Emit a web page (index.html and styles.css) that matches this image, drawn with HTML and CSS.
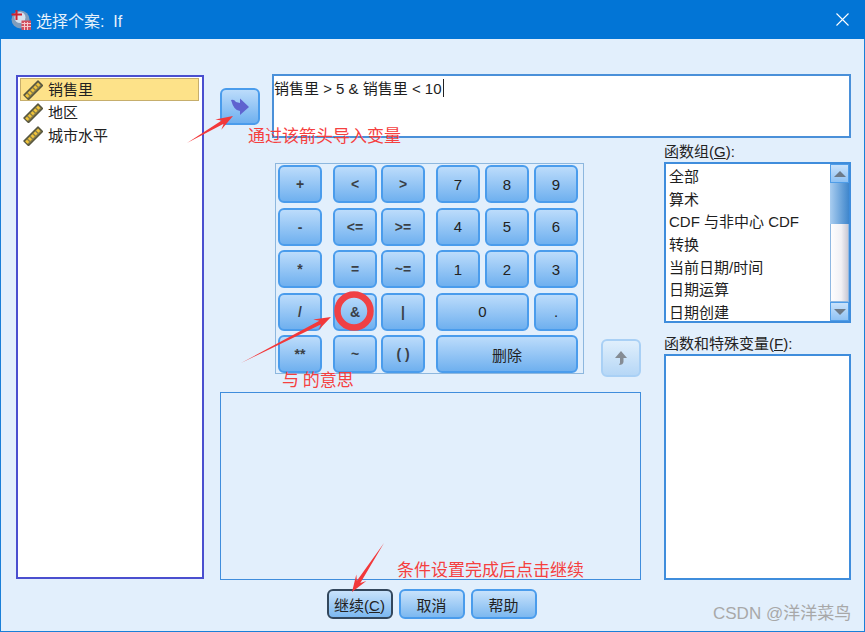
FILE: index.html
```html
<!DOCTYPE html>
<html lang="zh">
<head>
<meta charset="utf-8">
<title>选择个案: If</title>
<link rel="stylesheet" href="styles.css">
</head>
<body>
<svg class="defs" width="0" height="0" aria-hidden="true">
  <symbol id="ruler" viewBox="0 0 20 20">
    <path d="M1 15 L15 1 L19.500 5.500 L5.500 19.500 Z" fill="#8a7f4a" stroke="#57563f" stroke-width="1.500" stroke-linejoin="round"/>
    <path d="M3.300 16.700 L16.700 3.300" stroke="#f2c53a" stroke-width="3.200" stroke-dasharray="2.600 1.300"/>
  </symbol>
</svg>
<div class="window">
  <header class="titlebar">
    <svg class="app-icon" viewBox="0 0 20 20" width="20" height="20">
      <circle cx="9.500" cy="9.500" r="9" fill="#7f9dbc"/>
      <circle cx="9" cy="7.500" r="5.500" fill="#d5e2ee"/>
      <path d="M0.500 4.500 H11 M5.500 0 V10" stroke="#d0202f" stroke-width="2"/>
      <rect x="10.500" y="10.500" width="9.500" height="9.500" fill="#d2505f"/>
      <path d="M10.500 13.500 H20 M10.500 16.500 H20 M13.500 12 V20 M16.500 12 V20" stroke="#f4c9ce" stroke-width="1"/>
    </svg>
    <span class="title">选择个案:&nbsp;&nbsp;If</span>
    <svg class="close" viewBox="0 0 13 13" width="13" height="13">
      <path d="M0.500 0.500 L12.500 12.500 M12.500 0.500 L0.500 12.500" stroke="#fff" stroke-width="1.100"/>
    </svg>
  </header>

  <main class="main">
    <ul class="varlist">
      <li class="var selected"><svg class="ruler"><use href="#ruler"/></svg>销售里</li>
      <li class="var"><svg class="ruler"><use href="#ruler"/></svg>地区</li>
      <li class="var"><svg class="ruler"><use href="#ruler"/></svg>城市水平</li>
    </ul>

    <div class="work">
      <div class="top-row">
        <button class="move-btn">
          <svg viewBox="0 0 18 18" width="18" height="18">
            <path d="M0 2 Q3 1 5 4 L9 5 V0.500 L18 9 L9 17 V13 Q3 13 0 2 Z" fill="#5f63cf"/>
          </svg>
        </button>
        <div class="expr">销售里 &gt; 5 &amp; 销售里 &lt; 10<span class="caret"></span></div>
      </div>

      <div class="bottom-row">
        <div class="center">
          <div class="pad-row">
            <div class="keypad">
              <div class="group ops">
                <button class="key">+</button>
                <button class="key">-</button>
                <button class="key">*</button>
                <button class="key">/</button>
                <button class="key">**</button>
              </div>
              <div class="group rel">
                <button class="key">&lt;</button>
                <button class="key">&gt;</button>
                <button class="key">&lt;=</button>
                <button class="key">&gt;=</button>
                <button class="key">=</button>
                <button class="key">~=</button>
                <button class="key">&amp;</button>
                <button class="key">|</button>
                <button class="key">~</button>
                <button class="key">( )</button>
              </div>
              <div class="group nums">
                <button class="key digit">7</button>
                <button class="key digit">8</button>
                <button class="key digit">9</button>
                <button class="key digit">4</button>
                <button class="key digit">5</button>
                <button class="key digit">6</button>
                <button class="key digit">1</button>
                <button class="key digit">2</button>
                <button class="key digit">3</button>
                <button class="key digit span2">0</button>
                <button class="key digit">.</button>
                <button class="key digit span3">删除</button>
              </div>
            </div>
            <button class="up-btn">
              <svg viewBox="0 0 14 16" width="14" height="16">
                <path d="M7 1 L13 8 H9.500 V12 Q9 15 5 15 Q6.500 13 6 9 V8 H1 Z" fill="#858c94"/>
              </svg>
            </button>
          </div>
          <div class="panel"></div>
        </div>

        <aside class="side">
          <div class="label">函数组(<u>G</u>):</div>
          <div class="funcs">
            <ul class="func-items">
              <li>全部</li>
              <li>算术</li>
              <li>CDF 与非中心 CDF</li>
              <li>转换</li>
              <li>当前日期/时间</li>
              <li>日期运算</li>
              <li>日期创建</li>
            </ul>
            <div class="scrollbar">
              <div class="sb-btn"><span class="tri up"></span></div>
              <div class="sb-thumb"></div>
              <div class="sb-track"></div>
              <div class="sb-btn"><span class="tri down"></span></div>
            </div>
          </div>
          <div class="label second">函数和特殊变量(<u>F</u>):</div>
          <div class="specials"></div>
        </aside>
      </div>
    </div>
  </main>

  <footer class="footer">
    <button class="action default">继续(<u>C</u>)</button>
    <button class="action">取消</button>
    <button class="action">帮助</button>
  </footer>
</div>

<svg class="marks" viewBox="0 0 865 632" width="865" height="632" aria-hidden="true">
  <polygon points="187,143 221.700,120.400 215.300,119.400 233,116 221.300,129.800 223.700,123.800" fill="#f2383a"/>
  <polygon points="241,363 319.400,320.700 313.200,319.400 331,317 318.600,330 321.200,324.300" fill="#f2383a"/>
  <polygon points="384,543 356.900,580.800 356.300,574.500 352,592 366.300,581.100 360.300,583" fill="#f2383a"/>
  <circle cx="354" cy="311" r="16.500" fill="none" stroke="#f04044" stroke-width="6.500"/>
</svg>
<span class="note note-a">通过该箭头导入变量</span>
<span class="note note-b">与 的意思</span>
<span class="note note-c">条件设置完成后点击继续</span>
<span class="watermark">CSDN @洋洋菜鸟</span>
</body>
</html>
```
FILE: styles.css
```css
* { box-sizing: border-box; }
html, body { margin: 0; padding: 0; }
body {
  width: 865px;
  height: 632px;
  overflow: hidden;
  position: relative;
  background: #e2effc;
  color: #222;
  font-family: "Liberation Sans", "Noto Sans CJK SC", sans-serif;
  font-size: 15px;
}
ul { list-style: none; margin: 0; padding: 0; }
button { font: inherit; color: inherit; padding: 0; margin: 0; cursor: default; }
.defs { position: absolute; }

.window {
  width: 865px;
  height: 632px;
  display: flex;
  flex-direction: column;
  border: 1px solid #1a7fd8;
  border-top: 0;
}
.titlebar {
  height: 39px;
  flex: none;
  margin: 0 -1px;
  padding: 0 16px 0 11px;
  display: flex;
  align-items: center;
  background: #0275d6;
  color: #e6f1fb;
  font-size: 16px;
}
.app-icon { flex: none; }
.title { margin-left: 5px; flex: 1; }
.close { flex: none; }

.main {
  display: flex;
  gap: 16px;
  padding: 35px 0 0 15px;
  height: 541px;
  flex: none;
}
.varlist {
  width: 188px;
  height: 504px;
  margin-top: 1px;
  border: 2px solid #4a4fcf;
  background: #fff;
  padding: 1px 3px 1px 2px;
  flex: none;
}
.var {
  height: 23px;
  display: flex;
  align-items: center;
  gap: 5px;
  padding-left: 3px;
  font-size: 15px;
  line-height: 22px;
}
.var.selected {
  background: #fde289;
  box-shadow: inset 0 0 0 1px #c6ae6c;
}
.ruler { width: 20px; height: 20px; flex: none; }

.work { flex: none; width: 631px; }
.top-row { display: flex; gap: 12px; }
.move-btn {
  width: 40px;
  height: 37px;
  margin-top: 14px;
  flex: none;
  display: flex;
  align-items: center;
  justify-content: center;
  border: 2px solid #4a9cec;
  border-radius: 6px;
  background: linear-gradient(#bcdcfb, #6fb0ef);
}
.expr {
  width: 579px;
  height: 64px;
  border: 2px solid #4a90d9;
  background: #fff;
  padding: 2px 0 0;
  font-size: 15px;
  line-height: 21px;
  color: #1e1e1e;
}
.caret {
  display: inline-block;
  width: 1px;
  height: 18px;
  margin-left: 1px;
  vertical-align: -3px;
  background: #222;
}

.bottom-row { display: flex; margin-top: 5px; }
.center { width: 421px; flex: none; padding-top: 20px; }
.pad-row {
  height: 214px;
  margin-left: 55px;
  display: flex;
  justify-content: space-between;
}
.keypad {
  width: 309px;
  height: 211px;
  padding: 1px 0 0 2px;
  border: 1px solid #8db7de;
  display: flex;
  gap: 11px;
  align-items: flex-start;
}
.group {
  display: grid;
  grid-auto-rows: 38px;
  row-gap: 4.500px;
}
.ops { grid-template-columns: 44px; }
.rel { grid-template-columns: 44px 44px; column-gap: 4px; }
.nums { grid-template-columns: 44px 44px 44px; column-gap: 5px; }
.span2 { grid-column: span 2; }
.span3 { grid-column: span 3; }
.key {
  border: 2px solid #4a9cec;
  border-radius: 6px;
  background: linear-gradient(#bcdcfb, #6fb0ef);
  font-size: 14px;
  font-weight: 700;
  color: #3a3f46;
}
.digit { font-size: 15px; font-weight: 400; color: #222; }
.up-btn {
  width: 40px;
  height: 38px;
  align-self: flex-end;
  display: flex;
  align-items: center;
  justify-content: center;
  border: 2px solid #a9d0f5;
  border-radius: 6px;
  background: linear-gradient(#e0effc, #b6d7f6);
}
.panel {
  height: 188px;
  margin-top: 15px;
  border: 1px solid #3f8ddc;
}

.side { width: 187px; margin-left: 23px; flex: none; }
.label { height: 19px; font-size: 15px; line-height: 18px; color: #222; white-space: nowrap; }
.label.second { margin-top: 12px; }
.funcs {
  height: 161px;
  border: 2px solid #3f8ddc;
  background: #fff;
  display: flex;
  overflow: hidden;
}
.func-items { flex: 1; padding: 2px 0 0 3px; }
.func-items li { height: 22.700px; line-height: 22px; font-size: 15px; white-space: nowrap; color: #1e1e1e; }
.scrollbar {
  width: 19px;
  flex: none;
  display: flex;
  flex-direction: column;
  background: #a9d0f6;
}
.sb-btn {
  height: 19px;
  flex: none;
  display: flex;
  align-items: center;
  justify-content: center;
  border: 1px solid #4f9de8;
  background: linear-gradient(#c9e2fb, #8fc2f4);
}
.sb-thumb {
  height: 41px;
  flex: none;
  background: linear-gradient(90deg, #a9cdf0, #6ea6dc 55%, #3f86cc);
}
.sb-track {
  flex: 1;
  background: linear-gradient(90deg, #fdfdfe, #f1f1f5 60%, #c9c9d4);
  border: 1px solid #8fb8e2;
  border-top: 0;
}
.tri { width: 0; height: 0; border-left: 6px solid transparent; border-right: 6px solid transparent; }
.tri.up { border-bottom: 6px solid #6d7a88; }
.tri.down { border-top: 6px solid #6d7a88; }
.specials {
  height: 226px;
  border: 2px solid #3f8ddc;
  background: #fff;
}

.footer {
  padding: 9px 2px 0 0;
  display: flex;
  justify-content: center;
  gap: 6px;
}
.action {
  width: 66px;
  height: 30px;
  border: 2px solid #4a9cec;
  border-radius: 6px;
  background: linear-gradient(#c8e2fb, #7cb8f0);
  font-size: 15px;
  color: #222;
}
.action.default {
  border-color: #33475c;
}

.marks { position: absolute; left: 0; top: 0; pointer-events: none; }
.note {
  position: absolute;
  color: #f5403f;
  font-size: 17px;
  line-height: 20px;
  white-space: nowrap;
  font-family: "Noto Sans CJK SC", sans-serif;
}
.note-a { left: 248px; top: 125px; }
.note-b { left: 282px; top: 369px; }
.note-c { left: 397px; top: 559px; }
.watermark {
  position: absolute;
  left: 713px;
  top: 604px;
  font-size: 17px;
  line-height: 20px;
  color: #a8a8a8;
  white-space: nowrap;
}
```
